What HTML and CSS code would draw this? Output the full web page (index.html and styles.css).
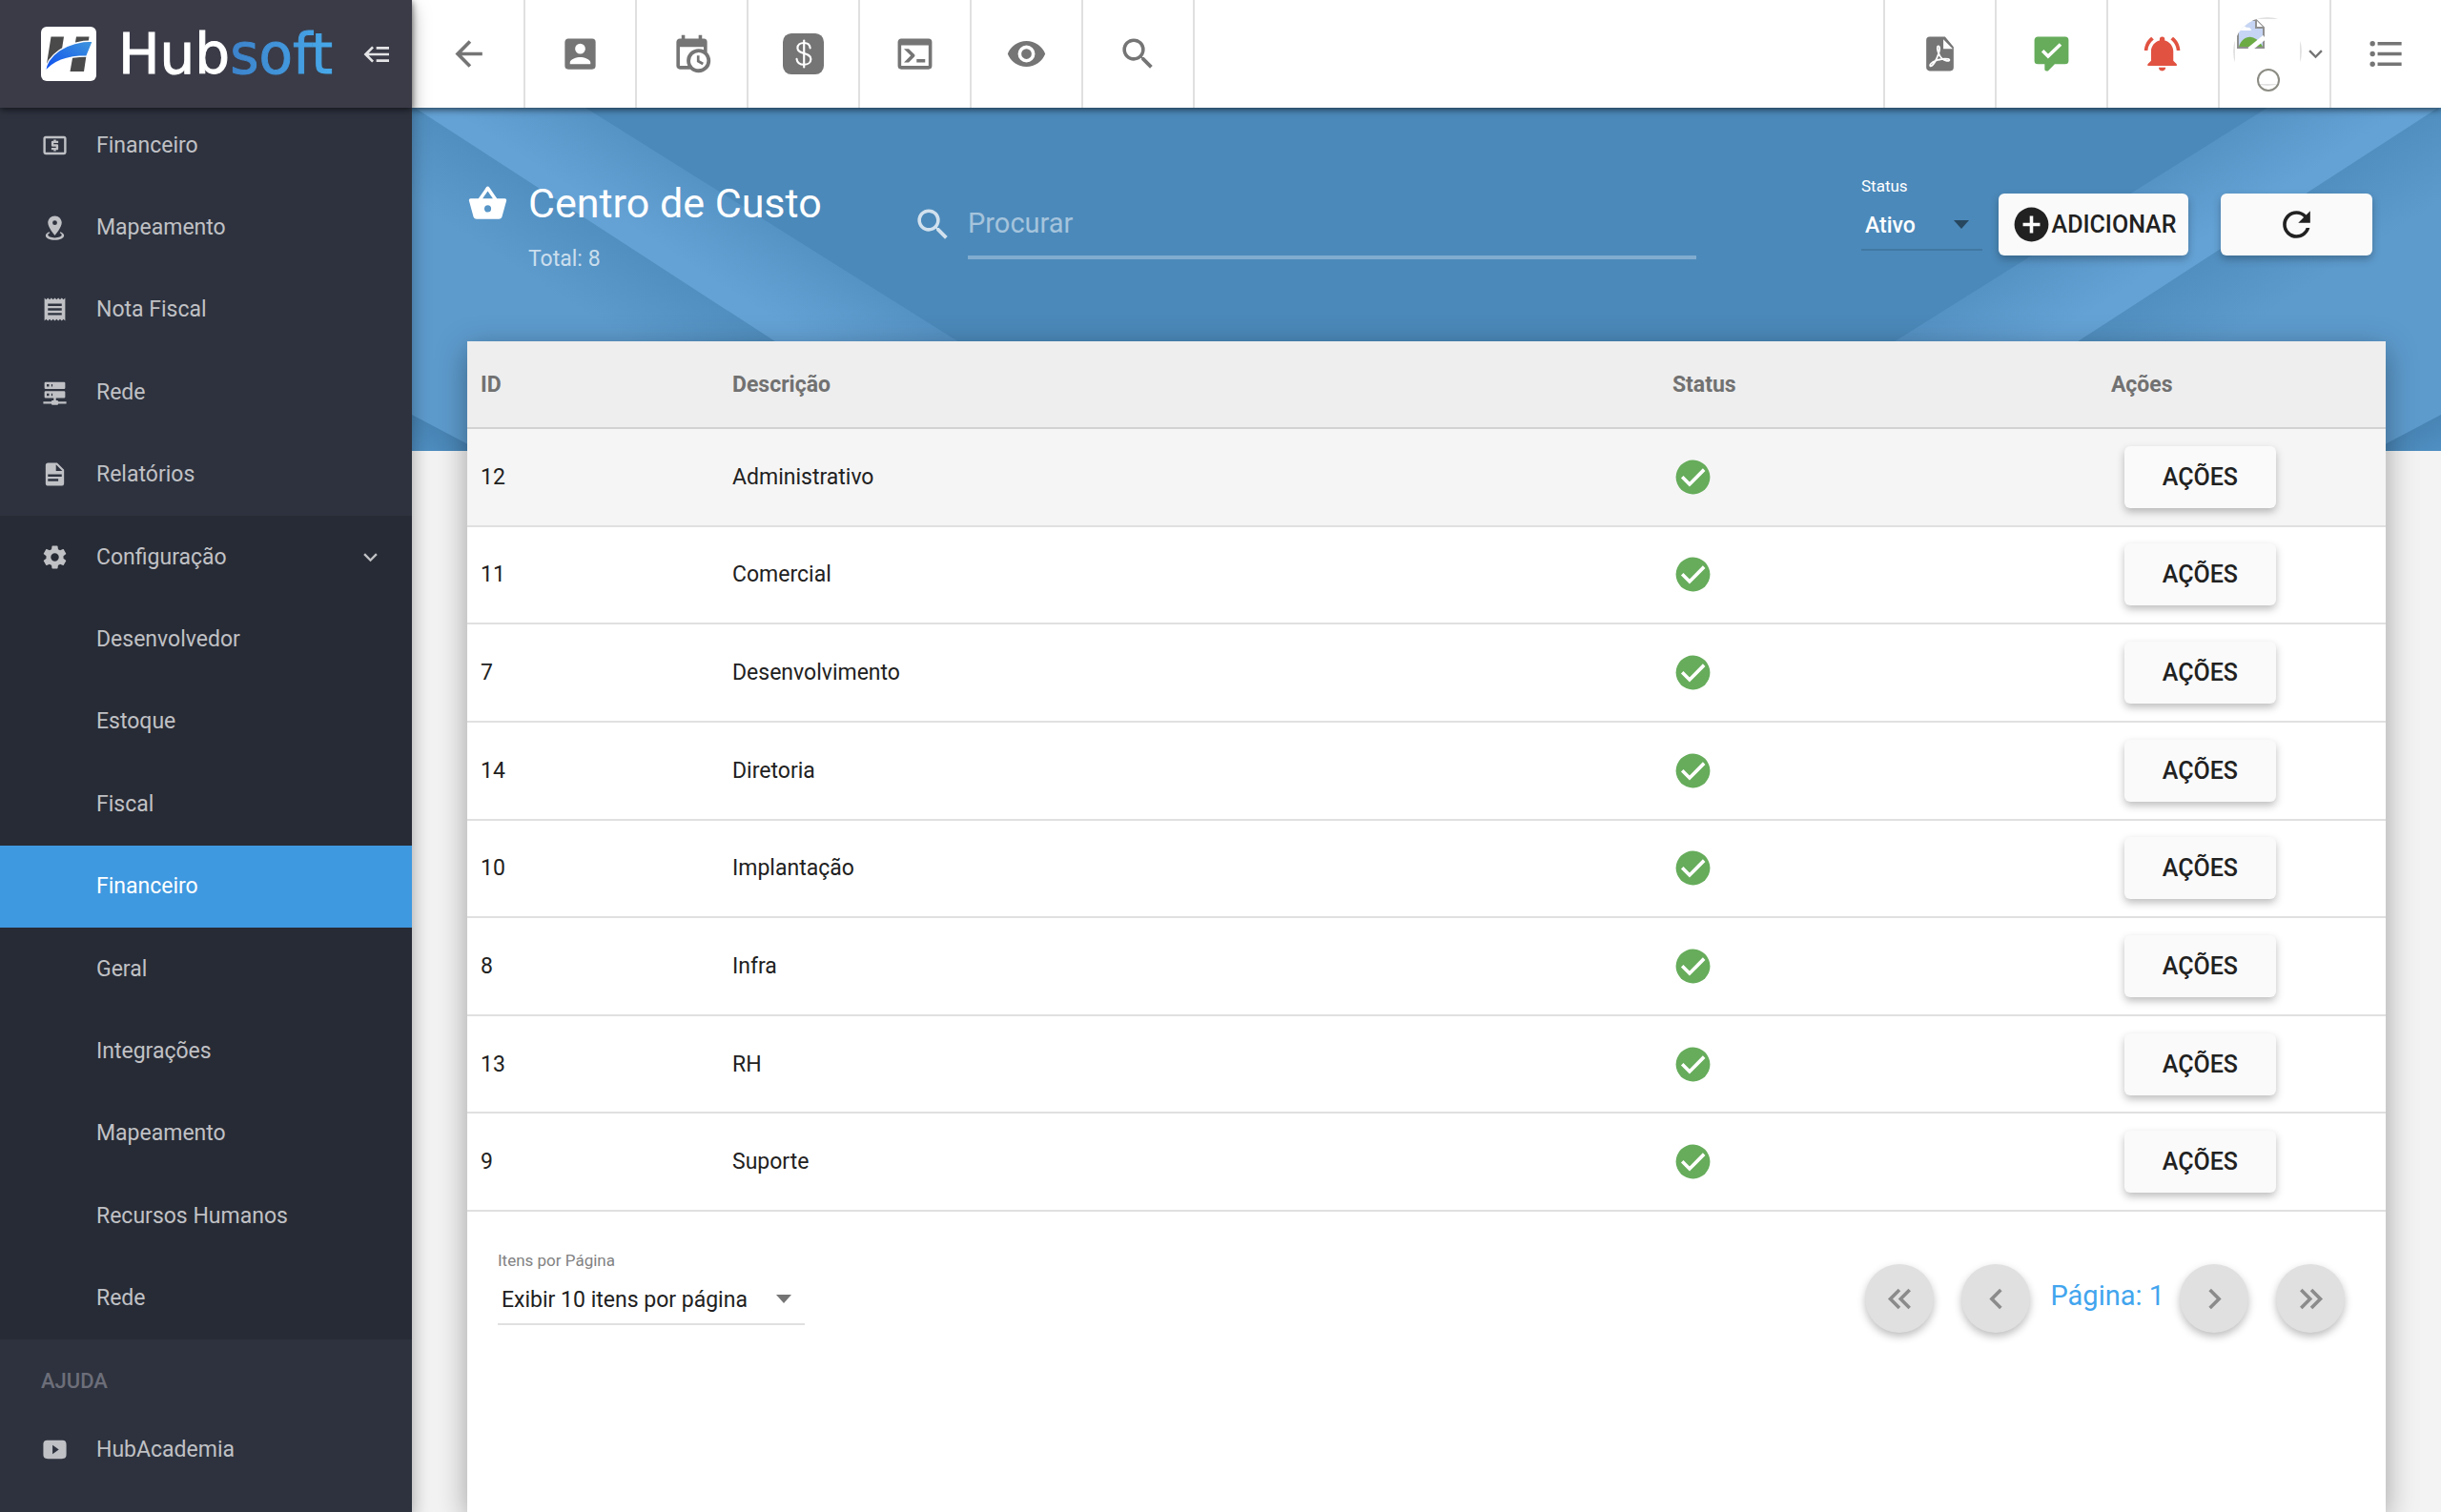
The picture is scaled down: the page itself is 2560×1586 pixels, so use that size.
FILE: index.html
```html
<!DOCTYPE html>
<html lang="pt-BR">
<head>
    <meta charset="utf-8">
    <title>Hubsoft - Centro de Custo</title>
    <link rel="stylesheet" href="styles.css">
</head>
<body>
    <!-- icons -->
    <svg class="sprite" aria-hidden="true">
        <symbol id="i-burger" viewBox="0 0 24 24"><path d="M5,13L9,17L7.6,18.42L1.18,12L7.6,5.58L9,7L5,11H21V13H5M21,6V8H11V6H21M21,16V18H11V16H21Z"/></symbol>
        <symbol id="i-back" viewBox="0 0 24 24"><path d="M20,11V13H8L13.5,18.5L12.08,19.92L4.16,12L12.08,4.08L13.5,5.5L8,11H20Z"/></symbol>
        <symbol id="i-account" viewBox="0 0 24 24"><path d="M6,17C6,15 10,13.9 12,13.9C14,13.9 18,15 18,17V18H6M15,9A3,3 0 0,1 12,12A3,3 0 0,1 9,9A3,3 0 0,1 12,6A3,3 0 0,1 15,9M3,5V19A2,2 0 0,0 5,21H19A2,2 0 0,0 21,19V5A2,2 0 0,0 19,3H5C3.89,3 3,3.9 3,5Z"/></symbol>
        <symbol id="i-calendar" viewBox="0 0 24 24"><path d="M15,13H16.5V15.82L18.94,17.23L18.19,18.53L15,16.69V13M19,8H5V19H9.67C9.24,18.09 9,17.07 9,16A7,7 0 0,1 16,9C17.07,9 18.09,9.24 19,9.67V8M5,21C3.89,21 3,20.1 3,19V5C3,3.89 3.89,3 5,3H6V1H8V3H16V1H18V3H19A2,2 0 0,1 21,5V11.1C22.24,12.36 23,14.09 23,16A7,7 0 0,1 16,23C14.09,23 12.36,22.24 11.1,21H5M16,11.15A4.85,4.85 0 0,0 11.15,16C11.15,18.68 13.32,20.85 16,20.85A4.85,4.85 0 0,0 20.85,16C20.85,13.32 18.68,11.15 16,11.15Z"/></symbol>
        <symbol id="i-money" viewBox="0 0 24 24"><rect width="24" height="24" rx="5"/><g fill="none" stroke="#fff" stroke-width="1.2" stroke-linecap="round"><path d="M12.4,4.2V19.8"/><path d="M16,8.6C15.8,6.6 14.3,5.6 12.3,5.6C10.2,5.6 8.6,6.7 8.6,8.6C8.6,12.6 16.4,10.8 16.4,15C16.4,17.1 14.6,18.3 12.4,18.3C10,18.3 8.4,17.2 8.1,15"/></g></symbol>
        <symbol id="i-console" viewBox="0 0 24 24"><path d="M20,19V7H4V19H20M20,3A2,2 0 0,1 22,5V19A2,2 0 0,1 20,21H4A2,2 0 0,1 2,19V5C2,3.89 2.9,3 4,3H20M13,17V15H18V17H13M9.58,13L5.57,9H8.4L11.7,12.3C12.09,12.69 12.09,13.33 11.7,13.72L8.42,17H5.59L9.58,13Z"/></symbol>
        <symbol id="i-eye" viewBox="0 0 24 24"><path d="M12,9A3,3 0 0,0 9,12A3,3 0 0,0 12,15A3,3 0 0,0 15,12A3,3 0 0,0 12,9M12,17A5,5 0 0,1 7,12A5,5 0 0,1 12,7A5,5 0 0,1 17,12A5,5 0 0,1 12,17M12,4.5C7,4.5 2.73,7.61 1,12C2.73,16.39 7,19.5 12,19.5C17,19.5 21.27,16.39 23,12C21.27,7.61 17,4.5 12,4.5Z"/></symbol>
        <symbol id="i-search" viewBox="0 0 24 24"><path d="M9.5,3A6.5,6.5 0 0,1 16,9.5C16,11.11 15.41,12.59 14.44,13.73L14.71,14H15.5L20.5,19L19,20.5L14,15.5V14.71L13.73,14.44C12.59,15.41 11.11,16 9.5,16A6.5,6.5 0 0,1 3,9.5A6.5,6.5 0 0,1 9.5,3M9.5,5C7,5 5,7 5,9.5C5,12 7,14 9.5,14C12,14 14,12 14,9.5C14,7 12,5 9.5,5Z"/></symbol>
        <symbol id="i-pdf" viewBox="0 0 24 24"><path fill-rule="evenodd" d="M14,9H19.5L14,3.5V9M6,2H15L20,8V20A2,2 0 0,1 18,22H6C4.89,22 4,21.1 4,20V4A2,2 0 0,1 6,2Z"/><path fill="none" stroke="#fff" stroke-width="1" stroke-linejoin="round" d="M11.2,11.6C10.3,9.6 10.3,7.6 11,7.5C12,7.4 12,9.4 11.3,11.6C10.4,14.4 8.2,19.2 6.5,19.2C5.6,18.6 7,16.9 9.6,16C12,15.1 15.2,14.6 16.8,15C18.2,15.5 17.3,16.3 16,16.1C13.8,15.8 12.2,14.2 11.2,11.6Z"/></symbol>
        <symbol id="i-comment" viewBox="0 0 24 24"><path d="M9,22A1,1 0 0,1 8,21V18H4A2,2 0 0,1 2,16V4C2,2.89 2.9,2 4,2H20A2,2 0 0,1 22,4V16A2,2 0 0,1 20,18H13.9L10.2,21.71C10,21.9 9.75,22 9.5,22H9Z"/><path fill="none" stroke="#fff" stroke-width="2" d="M6.8,10.2L10,13.4L17.3,6.4"/></symbol>
        <symbol id="i-bell" viewBox="0 0 24 24"><path d="M11.5,22C11.64,22 11.77,22 11.9,21.96C12.55,21.82 13.09,21.38 13.34,20.78C13.44,20.54 13.5,20.27 13.5,20H9.5A2,2 0 0,0 11.5,22M18,10.5C18,7.43 15.86,4.86 13,4.18V3.5A1.5,1.5 0 0,0 11.5,2A1.5,1.5 0 0,0 10,3.5V4.18C7.13,4.86 5,7.43 5,10.5V16L3,18V19H20V18L18,16M19.97,10H21.97C21.82,6.79 20.24,3.97 17.85,2.15L16.42,3.58C18.46,5 19.82,7.35 19.97,10M6.58,3.58L5.15,2.15C2.76,3.97 1.18,6.79 1,10H3C3.18,7.35 4.54,5 6.58,3.58Z"/></symbol>
        <symbol id="i-list" viewBox="0 0 24 24"><path d="M7,5H21V7H7V5M7,13V11H21V13H7M7,19V17H21V19H7"/><circle cx="4" cy="6" r="1.5"/><circle cx="4" cy="12" r="1.5"/><circle cx="4" cy="18" r="1.5"/></symbol>
        <symbol id="i-down" viewBox="0 0 24 24"><path d="M7.41,8.58L12,13.17L16.59,8.58L18,10L12,16L6,10L7.41,8.58Z"/></symbol>
        <symbol id="i-cash" viewBox="0 0 24 24"><path d="M20,18H4V6H20M20,4H4C2.89,4 2,4.89 2,6V18A2,2 0 0,0 4,20H20A2,2 0 0,0 22,18V6C22,4.89 21.1,4 20,4M11,17H13V16H14A1,1 0 0,0 15,15V12A1,1 0 0,0 14,11H11V10H15V8H13V7H11V8H10A1,1 0 0,0 9,9V12A1,1 0 0,0 10,13H13V14H9V16H11V17Z"/></symbol>
        <symbol id="i-map" viewBox="0 0 24 24"><path d="M12,2C15.31,2 18,4.66 18,7.95C18,12.41 12,19 12,19C12,19 6,12.41 6,7.95C6,4.66 8.69,2 12,2M12,6A2,2 0 0,0 10,8A2,2 0 0,0 12,10A2,2 0 0,0 14,8A2,2 0 0,0 12,6M20,19C20,21.21 16.42,23 12,23C7.58,23 4,21.21 4,19C4,17.71 5.22,16.56 7.11,15.83L7.75,16.74C6.67,17.19 6,17.81 6,18.5C6,19.88 8.69,21 12,21C15.31,21 18,19.88 18,18.5C18,17.81 17.33,17.19 16.25,16.74L16.89,15.83C18.78,16.56 20,17.71 20,19Z"/></symbol>
        <symbol id="i-receipt" viewBox="0 0 24 24"><path d="M18,9H6V7H18M18,13H6V11H18M18,17H6V15H18M3,22L4.5,20.5L6,22L7.5,20.5L9,22L10.5,20.5L12,22L13.5,20.5L15,22L16.5,20.5L18,22L19.5,20.5L21,22V2L19.5,3.5L18,2L16.5,3.5L15,2L13.5,3.5L12,2L10.5,3.5L9,2L7.5,3.5L6,2L4.5,3.5L3,2V22Z"/></symbol>
        <symbol id="i-server" viewBox="0 0 24 24"><path d="M13,19H14A1,1 0 0,1 15,20H22V22H15A1,1 0 0,1 14,23H10A1,1 0 0,1 9,22H2V20H9A1,1 0 0,1 10,19H11V17H4A1,1 0 0,1 3,16V12A1,1 0 0,1 4,11H20A1,1 0 0,1 21,12V16A1,1 0 0,1 20,17H13V19M4,3H20A1,1 0 0,1 21,4V8A1,1 0 0,1 20,9H4A1,1 0 0,1 3,8V4A1,1 0 0,1 4,3M9,7H10V5H9V7M9,15H10V13H9V15M5,5V7H7V5H5M5,13V15H7V13H5Z"/></symbol>
        <symbol id="i-file" viewBox="0 0 24 24"><path d="M13,9H18.5L13,3.5V9M6,2H14L20,8V20A2,2 0 0,1 18,22H6C4.89,22 4,21.1 4,20V4C4,2.89 4.89,2 6,2M15,18V16H6V18H15M18,14V12H6V14H18Z"/></symbol>
        <symbol id="i-gear" viewBox="0 0 24 24"><path d="M12,15.5A3.5,3.5 0 0,1 8.5,12A3.5,3.5 0 0,1 12,8.5A3.5,3.5 0 0,1 15.5,12A3.5,3.5 0 0,1 12,15.5M19.43,12.97C19.47,12.65 19.5,12.33 19.5,12C19.5,11.67 19.47,11.34 19.43,11L21.54,9.37C21.73,9.22 21.78,8.95 21.66,8.73L19.66,5.27C19.54,5.05 19.27,4.96 19.05,5.05L16.56,6.05C16.04,5.66 15.5,5.32 14.87,5.07L14.5,2.42C14.46,2.18 14.25,2 14,2H10C9.75,2 9.54,2.18 9.5,2.42L9.13,5.07C8.5,5.32 7.96,5.66 7.44,6.05L4.95,5.05C4.73,4.96 4.46,5.05 4.34,5.27L2.34,8.73C2.21,8.95 2.27,9.22 2.46,9.37L4.57,11C4.53,11.34 4.5,11.67 4.5,12C4.5,12.33 4.53,12.65 4.57,12.97L2.46,14.63C2.27,14.78 2.21,15.05 2.34,15.27L4.34,18.73C4.46,18.95 4.73,19.03 4.95,18.95L7.44,17.94C7.96,18.34 8.5,18.68 9.13,18.93L9.5,21.58C9.54,21.82 9.75,22 10,22H14C14.25,22 14.46,21.82 14.5,21.58L14.87,18.93C15.5,18.67 16.04,18.34 16.56,17.94L19.05,18.95C19.27,19.03 19.54,18.95 19.66,18.73L21.66,15.27C21.78,15.05 21.73,14.78 21.54,14.63L19.43,12.97Z"/></symbol>
        <symbol id="i-play" viewBox="0 0 24 24"><path fill-rule="evenodd" d="M10,8V16L15.5,12L10,8M6,4H18C21,4 22,5 22,8V16C22,19 21,20 18,20H6C3,20 2,19 2,16V8C2,5 3,4 6,4Z"/></symbol>
        <symbol id="i-basket" viewBox="0 0 24 24"><path d="M5.5,21C4.72,21 4.04,20.55 3.71,19.9L1.1,10.44L1,10A1,1 0 0,1 2,9H6.58L11.18,2.43C11.36,2.17 11.66,2 12,2C12.34,2 12.65,2.17 12.83,2.44L17.42,9H22A1,1 0 0,1 23,10L22.96,10.29L20.29,19.9C19.96,20.55 19.28,21 18.5,21H5.5M12,4.74L9,9H15L12,4.74M12,13A2,2 0 0,0 10,15A2,2 0 0,0 12,17A2,2 0 0,0 14,15A2,2 0 0,0 12,13Z"/></symbol>
        <symbol id="i-plus" viewBox="0 0 24 24"><path d="M17,13H13V17H11V13H7V11H11V7H13V11H17M12,2A10,10 0 0,0 2,12A10,10 0 0,0 12,22A10,10 0 0,0 22,12A10,10 0 0,0 12,2Z"/></symbol>
        <symbol id="i-refresh" viewBox="0 0 24 24"><path d="M17.65,6.35C16.2,4.9 14.21,4 12,4A8,8 0 0,0 4,12A8,8 0 0,0 12,20C15.73,20 18.84,17.45 19.73,14H17.65C16.83,16.33 14.61,18 12,18A6,6 0 0,1 6,12A6,6 0 0,1 12,6C13.66,6 15.14,6.69 16.22,7.78L13,11H20V4L17.65,6.35Z"/></symbol>
        <symbol id="i-check" viewBox="0 0 24 24"><circle cx="12" cy="12" r="10"/><path fill="none" stroke="#fff" stroke-width="2" d="M5.7,11.9L10,16.2L18.5,7.6"/></symbol>
        <symbol id="i-first" viewBox="0 0 24 24"><path d="M18.41,7.41L17,6L11,12L17,18L18.41,16.59L13.83,12L18.41,7.41M12.41,7.41L11,6L5,12L11,18L12.41,16.59L7.83,12L12.41,7.41Z"/></symbol>
        <symbol id="i-prev" viewBox="0 0 24 24"><path d="M15.41,16.58L10.83,12L15.41,7.41L14,6L8,12L14,18L15.41,16.58Z"/></symbol>
        <symbol id="i-next" viewBox="0 0 24 24"><path d="M8.59,16.58L13.17,12L8.59,7.41L10,6L16,12L10,18L8.59,16.58Z"/></symbol>
        <symbol id="i-last" viewBox="0 0 24 24"><path d="M5.59,7.41L7,6L13,12L7,18L5.59,16.59L10.17,12L5.59,7.41M11.59,7.41L13,6L19,12L13,18L11.59,16.59L16.17,12L11.59,7.41Z"/></symbol>
    </svg>

    <aside class="sidebar">
        <div class="brand">
            <svg class="brand-badge" viewBox="0 0 58 57">
                <defs>
                    <linearGradient id="swoosh" x1="0" y1="1" x2="1" y2="0">
                        <stop offset="0" stop-color="#0a4bf0"/>
                        <stop offset="1" stop-color="#3f97dc"/>
                    </linearGradient>
                </defs>
                <rect width="58" height="57" rx="6" fill="#fff"/>
                <path fill="#4a4a4a" d="M10.500,10.500H24L20,36L6,39ZM37,10.500H50.500L45,47H30.500Z"/>
                <path fill="url(#swoosh)" stroke="#fff" stroke-width="1.500" d="M4,48C6,30 26,15 54.500,15L48,31C26,31 12,37 4,48Z"/>
            </svg>
            <span class="brand-name">Hub<span class="brand-soft">soft</span></span>
            <button class="fold" type="button" aria-label="Recolher menu"><svg><use href="#i-burger"/></svg></button>
        </div>
        <nav class="menu">
            <div class="menu-top">
                <a class="menu-link" href="#"><svg><use href="#i-cash"/></svg>Financeiro</a>
                <a class="menu-link" href="#"><svg><use href="#i-map"/></svg>Mapeamento</a>
                <a class="menu-link" href="#"><svg><use href="#i-receipt"/></svg>Nota Fiscal</a>
                <a class="menu-link" href="#"><svg><use href="#i-server"/></svg>Rede</a>
                <a class="menu-link" href="#"><svg><use href="#i-file"/></svg>Relatórios</a>
            </div>
            <div class="menu-open">
                <a class="menu-link" href="#"><svg><use href="#i-gear"/></svg>Configuração<svg class="menu-arrow"><use href="#i-down"/></svg></a>
                <a class="menu-link sub" href="#">Desenvolvedor</a>
                <a class="menu-link sub" href="#">Estoque</a>
                <a class="menu-link sub" href="#">Fiscal</a>
                <a class="menu-link sub active" href="#">Financeiro</a>
                <a class="menu-link sub" href="#">Geral</a>
                <a class="menu-link sub" href="#">Integrações</a>
                <a class="menu-link sub" href="#">Mapeamento</a>
                <a class="menu-link sub" href="#">Recursos Humanos</a>
                <a class="menu-link sub" href="#">Rede</a>
            </div>
            <div class="menu-title">AJUDA</div>
            <a class="menu-link help" href="#"><svg><use href="#i-play"/></svg>HubAcademia</a>
        </nav>
    </aside>

    <div class="page">
        <div class="topbar">
            <button class="tool" type="button" aria-label="Voltar"><svg><use href="#i-back"/></svg></button>
            <button class="tool" type="button" aria-label="Cliente"><svg><use href="#i-account"/></svg></button>
            <button class="tool" type="button" aria-label="Agenda"><svg><use href="#i-calendar"/></svg></button>
            <button class="tool" type="button" aria-label="Cobrança"><svg><use href="#i-money"/></svg></button>
            <button class="tool" type="button" aria-label="Console"><svg><use href="#i-console"/></svg></button>
            <button class="tool" type="button" aria-label="Visualizar"><svg><use href="#i-eye"/></svg></button>
            <button class="tool" type="button" aria-label="Pesquisar"><svg><use href="#i-search"/></svg></button>
            <div class="topbar-right">
                <button class="tool" type="button" aria-label="PDF"><svg><use href="#i-pdf"/></svg></button>
                <button class="tool green" type="button" aria-label="Mensagens"><svg><use href="#i-comment"/></svg></button>
                <button class="tool red" type="button" aria-label="Notificações"><svg><use href="#i-bell"/></svg></button>
                <button class="tool user" type="button" aria-label="Usuário">
                    <svg class="avatar" viewBox="0 0 72 78">
                        <defs><clipPath id="round"><circle cx="36" cy="36" r="36"/></clipPath></defs>
                        <g clip-path="url(#round)">
                            <rect x="1" y="1" width="70" height="70" fill="none" stroke="#c4c4c4" stroke-width="1"/>
                            <path d="M5,3H24L32,11V32H5Z" fill="#c6d5f3" stroke="#8f8f8f" stroke-width="2"/>
                            <path d="M5,14C7,9 12,8 14,11C17,10 19,12 19,14Z" fill="#fff"/>
                            <path d="M6,31C8,24 14,20 19,21C25,22 29,27 31,31Z" fill="#6cab44"/>
                            <path d="M24,3V11H32" fill="#fff" stroke="#8f8f8f" stroke-width="2"/>
                            <path d="M17,34L33,21" stroke="#fff" stroke-width="5"/>
                        </g>
                        <circle cx="37" cy="66" r="11" fill="none" stroke="#8c8c84" stroke-width="2"/>
                    </svg>
                    <svg class="user-arrow"><use href="#i-down"/></svg>
                </button>
                <button class="tool" type="button" aria-label="Menu rápido"><svg><use href="#i-list"/></svg></button>
            </div>
        </div>

        <header class="head">
            <svg class="head-bg" viewBox="0 0 2128 360" preserveAspectRatio="none" aria-hidden="true">
                <defs>
                    <linearGradient id="mid" gradientUnits="userSpaceOnUse" x1="190" y1="122" x2="145" y2="192">
                        <stop offset="0" stop-color="#518fc0"/>
                        <stop offset="1" stop-color="#5d9bcd"/>
                    </linearGradient>
                    <linearGradient id="band" gradientUnits="userSpaceOnUse" x1="390" y1="130" x2="345" y2="200">
                        <stop offset="0" stop-color="#5693c5"/>
                        <stop offset="1" stop-color="#64a2d5"/>
                    </linearGradient>
                    <linearGradient id="low" gradientUnits="userSpaceOnUse" x1="30" y1="336" x2="14" y2="366">
                        <stop offset="0" stop-color="#4884b4"/>
                        <stop offset="1" stop-color="#4f8fc2"/>
                    </linearGradient>
                    <g id="stripes">
                        <path fill="url(#band)" d="M0,0H182L756,360H0Z"/>
                        <path fill="url(#mid)" d="M0,-2L558,360H0Z"/>
                        <path fill="url(#low)" d="M0,322L72,360H0Z"/>
                    </g>
                </defs>
                <use href="#stripes"/>
                <use href="#stripes" transform="translate(2128 0) scale(-1 1)"/>
            </svg>
            <div class="head-title">
                <svg class="icon"><use href="#i-basket"/></svg>
                <div>
                    <h1>Centro de Custo</h1>
                    <p>Total: 8</p>
                </div>
            </div>
            <div class="search">
                <label for="busca" aria-label="Procurar"><svg class="icon"><use href="#i-search"/></svg></label>
                <input id="busca" type="text" placeholder="Procurar">
            </div>
            <div class="head-actions">
                <div class="field light">
                    <label for="status">Status</label>
                    <select id="status"><option>Ativo</option><option>Inativo</option></select>
                </div>
                <button class="btn add" type="button"><svg class="icon"><use href="#i-plus"/></svg>ADICIONAR</button>
                <button class="btn reload" type="button" aria-label="Atualizar"><svg class="icon"><use href="#i-refresh"/></svg></button>
            </div>
        </header>

        <main class="card">
            <table>
                <thead>
                    <tr><th class="col-id">ID</th><th class="col-desc">Descrição</th><th class="col-status">Status</th><th>Ações</th></tr>
                </thead>
                <tbody>
                    <tr class="hover"><td>12</td><td>Administrativo</td><td><svg class="ok"><use href="#i-check"/></svg></td><td><button class="btn" type="button">AÇÕES</button></td></tr>
                    <tr><td>11</td><td>Comercial</td><td><svg class="ok"><use href="#i-check"/></svg></td><td><button class="btn" type="button">AÇÕES</button></td></tr>
                    <tr><td>7</td><td>Desenvolvimento</td><td><svg class="ok"><use href="#i-check"/></svg></td><td><button class="btn" type="button">AÇÕES</button></td></tr>
                    <tr><td>14</td><td>Diretoria</td><td><svg class="ok"><use href="#i-check"/></svg></td><td><button class="btn" type="button">AÇÕES</button></td></tr>
                    <tr><td>10</td><td>Implantação</td><td><svg class="ok"><use href="#i-check"/></svg></td><td><button class="btn" type="button">AÇÕES</button></td></tr>
                    <tr><td>8</td><td>Infra</td><td><svg class="ok"><use href="#i-check"/></svg></td><td><button class="btn" type="button">AÇÕES</button></td></tr>
                    <tr><td>13</td><td>RH</td><td><svg class="ok"><use href="#i-check"/></svg></td><td><button class="btn" type="button">AÇÕES</button></td></tr>
                    <tr><td>9</td><td>Suporte</td><td><svg class="ok"><use href="#i-check"/></svg></td><td><button class="btn" type="button">AÇÕES</button></td></tr>
                </tbody>
            </table>
            <div class="card-foot">
                <div class="field wide">
                    <label for="itens">Itens por Página</label>
                    <select id="itens"><option>Exibir 10 itens por página</option></select>
                </div>
                <div class="pager">
                    <button type="button" aria-label="Primeira" disabled><svg class="icon"><use href="#i-first"/></svg></button>
                    <button type="button" aria-label="Anterior" disabled><svg class="icon"><use href="#i-prev"/></svg></button>
                    <span class="pager-text">Página: 1</span>
                    <button type="button" aria-label="Próxima" disabled><svg class="icon"><use href="#i-next"/></svg></button>
                    <button type="button" aria-label="Última" disabled><svg class="icon"><use href="#i-last"/></svg></button>
                </div>
            </div>
        </main>
    </div>
</body>
</html>
```
FILE: styles.css
```css
* {
    box-sizing: border-box;
}

body {
    margin: 0;
    display: flex;
    min-height: 100vh;
    background: #f3f3f3;
    color: #212121;
    font-family: Roboto, "Liberation Sans", sans-serif;
    font-size: 23px;
}

button, input, select {
    font-family: inherit;
    font-size: inherit;
    color: inherit;
    border: 0;
    background: none;
    padding: 0;
}

button {
    cursor: pointer;
}

svg {
    display: block;
    fill: currentColor;
    flex-shrink: 0;
}

.sprite {
    position: absolute;
    width: 0;
    height: 0;
}

.icon {
    width: 43px;
    height: 43px;
}

/* sidebar */
.sidebar {
    position: relative;
    z-index: 3;
    width: 432px;
    flex-shrink: 0;
    background: #2d323e;
    color: #c0c1c5;
    box-shadow: 0 8px 18px rgba(0,0,0,.35);
}

.brand {
    position: relative;
    z-index: 1;
    display: flex;
    align-items: center;
    height: 113px;
    padding: 0 20px 0 43px;
    background: #3a3b47;
    box-shadow: 0 2px 7px rgba(0,0,0,.6);
}

.brand-badge {
    width: 58px;
    height: 57px;
}

.brand-name {
    margin-left: 23px;
    color: #fff;
    font-family: "DejaVu Sans", sans-serif;
    font-size: 58px;
    line-height: 64px;
    -webkit-text-stroke: 1px;
}

.brand-soft {
    color: transparent;
    background: linear-gradient(90deg, #3c82cb, #47a9ea);
    -webkit-background-clip: text;
    background-clip: text;
}

.fold {
    margin-left: auto;
    color: #e4e4e6;
}

.fold svg {
    width: 32px;
    height: 32px;
}

.menu {
    margin-top: -4px;
}

.menu-top, .menu-open {
    display: grid;
    grid-auto-rows: 1fr;
    height: 432px;
}

.menu-open {
    height: 864px;
    background: #272b35;
}

.menu-link {
    display: flex;
    align-items: center;
    padding: 0 29px 0 43px;
    color: inherit;
    text-decoration: none;
}

.menu-link svg {
    width: 29px;
    height: 29px;
    margin-right: 29px;
}

.menu-link .menu-arrow {
    margin: 0 0 0 auto;
}

.menu-link.sub {
    padding-left: 101px;
}

.menu-link.active {
    background: #3f99e0;
    color: #fff;
}

.menu-link.help {
    height: 86px;
}

.menu-title {
    padding-left: 43px;
    color: #6c6e79;
    font-size: 22px;
    font-weight: 500;
    line-height: 88px;
    height: 72px;
}

/* page */
.page {
    display: flex;
    flex-direction: column;
    flex: 1;
    min-width: 0;
}

.topbar {
    position: relative;
    z-index: 2;
    display: flex;
    height: 113px;
    padding-left: 2px;
    background: #fff;
    color: #757575;
    box-shadow: 0 2px 7px rgba(0,0,0,.6);
}

.topbar-right {
    display: flex;
    margin-left: auto;
    border-left: 2px solid #e0e0e0;
}

.tool {
    display: flex;
    align-items: center;
    justify-content: center;
    width: 117px;
    border-right: 2px solid #e0e0e0;
}

.topbar-right .tool:last-child {
    width: 115px;
    border-right: 0;
}

.tool.user {
    padding-left: 14px;
}

.tool svg {
    width: 43px;
    height: 43px;
}

.tool.green {
    color: #66ac5b;
}

.tool.red {
    color: #e15241;
}

.tool .avatar {
    width: 72px;
    height: 78px;
}

.tool .user-arrow {
    width: 29px;
    height: 29px;
}

.head {
    position: relative;
    display: grid;
    grid-template-columns: 467px minmax(0, 1fr) auto;
    align-items: start;
    height: 360px;
    padding: 71px 72px 0 58px;
    background: #4b89ba;
    color: #fff;
}

/* striped backdrop under the header content */
.head-bg {
    position: absolute;
    top: 0;
    left: 0;
    width: 100%;
    height: 100%;
}

.head-title, .search, .head-actions {
    position: relative;
    display: flex;
}

.head-title {
    gap: 21px;
    padding-top: 4px;
}

.head-title .icon {
    margin-top: 4px;
}

h1 {
    margin: 0 0 19px;
    font-size: 43px;
    font-weight: 400;
    line-height: 50px;
}

.head-title p {
    margin: 0;
    line-height: 30px;
    color: rgba(255,255,255,.7);
}

.search {
    gap: 15px;
    padding-top: 14px;
}

.search label {
    padding-top: 16px;
    color: rgba(255,255,255,.75);
}

.search input {
    flex: 1;
    min-width: 0;
    height: 74px;
    padding-top: 2px;
    border-bottom: 4px solid rgba(255,255,255,.3);
    font-size: 29px;
}

.search input::placeholder {
    color: rgba(255,255,255,.5);
}

.head-actions {
    margin-left: 173px;
}

.field {
    position: relative;
    display: flex;
    flex-direction: column;
    width: 322px;
}

.field label {
    font-size: 17px;
    line-height: 22px;
    color: #828282;
}

.field select {
    height: 55px;
    margin-top: 2px;
    padding: 4px 30px 0 4px;
    border-bottom: 2px solid #e0e0e0;
    appearance: none;
}

.field::after {
    content: "";
    position: absolute;
    right: 14px;
    top: 47px;
    border: 8px solid transparent;
    border-top: 9px solid #757575;
    border-bottom: 0;
    pointer-events: none;
}

.field.light {
    width: 127px;
    margin-right: 17px;
}

.field.light label {
    color: #fff;
}

.field.light select {
    border-color: rgba(0,0,0,.12);
    font-weight: 500;
}

.field.light option {
    color: #212121;
}

.field.light::after {
    border-top-color: #27475f;
}

.btn {
    display: flex;
    align-items: center;
    justify-content: center;
    width: 159px;
    height: 65px;
    border-radius: 6px;
    background: #fafafa;
    color: #212121;
    font-size: 25px;
    font-weight: 500;
    box-shadow: 0 4px 9px rgba(0,0,0,.26);
}

.btn.add, .btn.reload {
    margin-top: 19px;
}

.btn.add {
    width: 199px;
    margin-right: 34px;
}

/* card */
.card {
    position: relative;
    flex: 1;
    margin: -115px 58px 0;
    background: #fff;
    box-shadow: 0 8px 30px rgba(0,0,0,.35);
}

table {
    width: 100%;
    height: 913px;
    border-collapse: separate;
    border-spacing: 0;
    table-layout: fixed;
}

.col-id {
    width: 264px;
}

.col-desc {
    width: 49%;
}

.col-status {
    width: 460px;
}

th, td {
    padding: 0 14px;
    text-align: left;
    border-bottom: 2px solid #e0e0e0;
}

th {
    height: 92px;
    background: #eee;
    color: #717171;
    font-weight: 700;
    border-color: #d2d2d2;
}

.hover td {
    background: #f5f5f5;
}

td .btn {
    margin-left: 14px;
}

.ok {
    width: 43px;
    height: 43px;
    color: #66ac5b;
}

.card-foot {
    display: flex;
    align-items: flex-start;
    justify-content: space-between;
    padding: 40px 43px 0 32px;
}

.pager {
    display: flex;
    align-items: center;
    gap: 29px;
    padding-top: 15px;
}

.pager button {
    display: flex;
    align-items: center;
    justify-content: center;
    width: 72px;
    height: 72px;
    border-radius: 50%;
    background: #e0e0e0;
    color: #8b8b8b;
    box-shadow: 0 4px 9px rgba(0,0,0,.26);
}

.pager-text {
    margin: 0 -13px 0 -8px;
    padding-bottom: 6px;
    color: #42a5ee;
    font-size: 29px;
}
```
